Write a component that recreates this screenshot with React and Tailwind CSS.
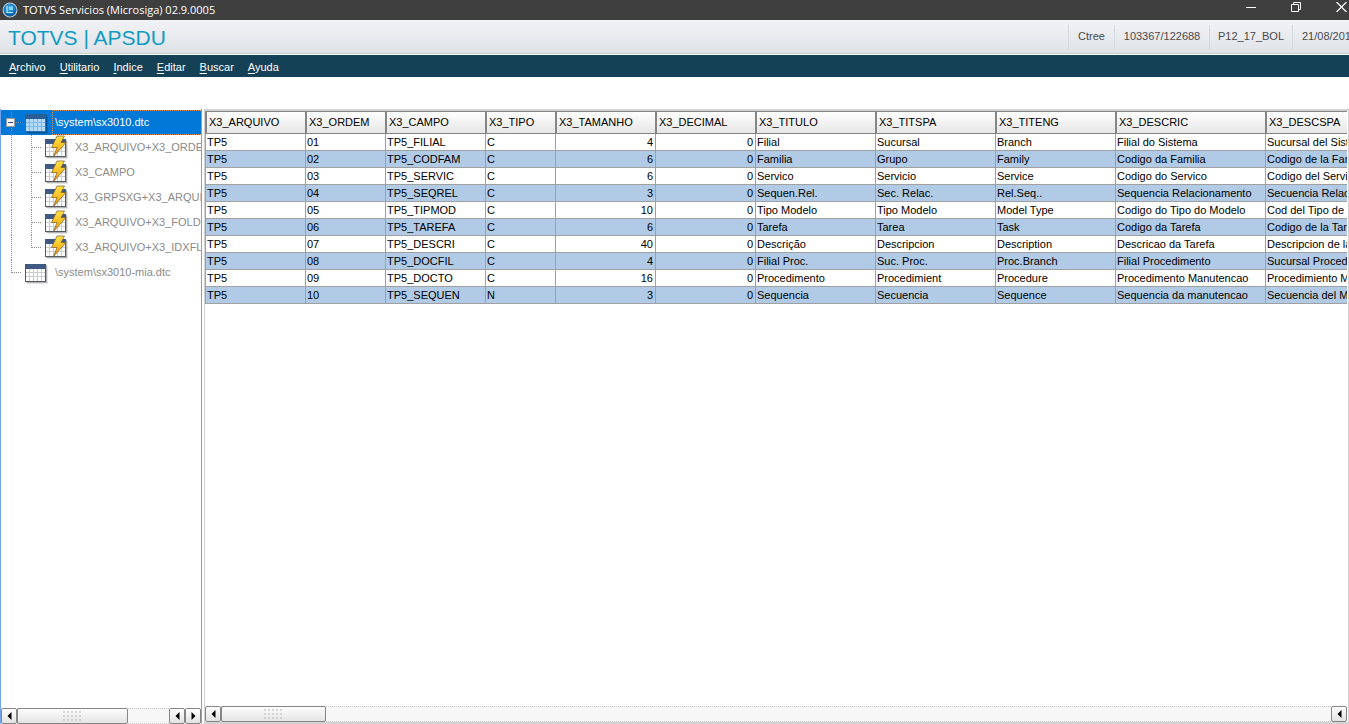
import React, { useState } from 'react';
import clsx from 'clsx';

const menuItems = ['Archivo', 'Utilitario', 'Indice', 'Editar', 'Buscar', 'Ayuda'];

const statusItems = [
  { label: 'Ctree', width: 'w-[46px]' },
  { label: '103367/122688', width: 'w-[95px]' },
  { label: 'P12_17_BOL', width: 'w-[83px]' },
  { label: '21/08/201', width: 'w-[57px]' },
];

const treeItems = [
  { label: '\\system\\sx3010.dtc', level: 0, open: true },
  { label: 'X3_ARQUIVO+X3_ORDEM', level: 1 },
  { label: 'X3_CAMPO', level: 1 },
  { label: 'X3_GRPSXG+X3_ARQUIV', level: 1 },
  { label: 'X3_ARQUIVO+X3_FOLDE', level: 1 },
  { label: 'X3_ARQUIVO+X3_IDXFLD', level: 1, last: true },
  { label: '\\system\\sx3010-mia.dtc', level: 0, last: true },
];

const columns = [
  { name: 'X3_ARQUIVO', width: 'w-[100px]' },
  { name: 'X3_ORDEM', width: 'w-[80px]' },
  { name: 'X3_CAMPO', width: 'w-[100px]' },
  { name: 'X3_TIPO', width: 'w-[70px]' },
  { name: 'X3_TAMANHO', width: 'w-[100px]', numeric: true },
  { name: 'X3_DECIMAL', width: 'w-[100px]', numeric: true },
  { name: 'X3_TITULO', width: 'w-[120px]' },
  { name: 'X3_TITSPA', width: 'w-[120px]' },
  { name: 'X3_TITENG', width: 'w-[120px]' },
  { name: 'X3_DESCRIC', width: 'w-[150px]' },
  { name: 'X3_DESCSPA', width: 'w-[150px]' },
];

const rows = [
  ['TP5', '01', 'TP5_FILIAL', 'C', '4', '0', 'Filial', 'Sucursal', 'Branch', 'Filial do Sistema', 'Sucursal del Sistema'],
  ['TP5', '02', 'TP5_CODFAM', 'C', '6', '0', 'Familia', 'Grupo', 'Family', 'Codigo da Familia', 'Codigo de la Familia'],
  ['TP5', '03', 'TP5_SERVIC', 'C', '6', '0', 'Servico', 'Servicio', 'Service', 'Codigo do Servico', 'Codigo del Servicio'],
  ['TP5', '04', 'TP5_SEQREL', 'C', '3', '0', 'Sequen.Rel.', 'Sec. Relac.', 'Rel.Seq..', 'Sequencia Relacionamento', 'Secuencia Relacion'],
  ['TP5', '05', 'TP5_TIPMOD', 'C', '10', '0', 'Tipo Modelo', 'Tipo Modelo', 'Model Type', 'Codigo do Tipo do Modelo', 'Cod del Tipo de Modelo'],
  ['TP5', '06', 'TP5_TAREFA', 'C', '6', '0', 'Tarefa', 'Tarea', 'Task', 'Codigo da Tarefa', 'Codigo de la Tarea'],
  ['TP5', '07', 'TP5_DESCRI', 'C', '40', '0', 'Descrição', 'Descripcion', 'Description', 'Descricao da Tarefa', 'Descripcion de la Tarea'],
  ['TP5', '08', 'TP5_DOCFIL', 'C', '4', '0', 'Filial Proc.', 'Suc. Proc.', 'Proc.Branch', 'Filial Procedimento', 'Sucursal Procedimiento'],
  ['TP5', '09', 'TP5_DOCTO', 'C', '16', '0', 'Procedimento', 'Procedimient', 'Procedure', 'Procedimento Manutencao', 'Procedimiento Mant.'],
  ['TP5', '10', 'TP5_SEQUEN', 'N', '3', '0', 'Sequencia', 'Secuencia', 'Sequence', 'Sequencia da manutencao', 'Secuencia del Mant.'],
];

const AppLogo = () => (
  <svg width="16" height="16" viewBox="0 0 16 16" aria-hidden="true">
    <defs>
      <radialGradient id="globe" cx="0.45" cy="0.35" r="0.65">
        <stop offset="0" stopColor="#3fb0ea" />
        <stop offset="0.7" stopColor="#1277bd" />
        <stop offset="1" stopColor="#0b4c86" />
      </radialGradient>
    </defs>
    <circle cx="8" cy="8" r="7.5" fill="#b9c8d4" />
    <circle cx="8" cy="8" r="6.4" fill="url(#globe)" />
    <path d="M5 4v6.500h6" fill="none" stroke="#bfe6fb" strokeWidth="1.200" />
    <path d="M7 4.500h4V8H7z" fill="#8fd0f5" />
  </svg>
);

// connector lines drawn to the left of a tree node
const Guide = ({ branch, last, box }) => (
  <svg className="shrink-0" width="20" height="25" viewBox="0 0 20 25" aria-hidden="true">
    <path d={last ? 'M10.500 0V13' : 'M10.500 0V25'} stroke="#8c8c8c" strokeDasharray="1 1" />
    {branch && <path d="M11 12.500H20" stroke="#8c8c8c" strokeDasharray="1 1" />}
    {box && (
      <>
        <rect x="5.500" y="8.500" width="8" height="8" fill="#f4f4f4" stroke="#9a9a9a" />
        <path d="M7 12.500h5" stroke="#3c4f86" />
      </>
    )}
  </svg>
);

const TableIcon = ({ selected, indexed }) => (
  <svg className="ml-1 shrink-0" width="27" height="25" viewBox="0 0 27 25" aria-hidden="true">
    <rect x="2" y="6" width="21" height="18" rx="1" fill="#000" opacity="0.100" />
    <rect x="1" y="5" width="21" height="18" fill="#000" opacity="0.220" />
    <rect x="0.500" y="4.500" width="20" height="17" fill={selected ? '#b4dbf8' : '#fff'} stroke={selected ? '#2f6ea8' : '#555b63'} />
    <rect x="0" y="4" width="21" height="5" fill={selected ? '#2a5f96' : '#3f5a82'} />
    <path
      d="M1 12.500h19M1 16.500h19M4.500 9v12M8.500 9v12M12.500 9v12M16.500 9v12"
      stroke={selected ? '#7db9e6' : '#c9ccd1'}
      fill="none"
    />
    {indexed && (
      <path
        d="M12 1h7.500l-3.500 6.500h5L8.500 21.500l3.500-9H6.500z"
        fill="url(#bolt)"
        stroke="#7d5b18"
        strokeWidth="0.700"
      />
    )}
    <defs>
      <linearGradient id="bolt" x1="0" y1="0" x2="0" y2="1">
        <stop offset="0" stopColor="#ffe14f" />
        <stop offset="0.500" stopColor="#fcc021" />
        <stop offset="1" stopColor="#e08a0c" />
      </linearGradient>
    </defs>
  </svg>
);

const ScrollButton = ({ direction }) => (
  <button
    type="button"
    aria-label={direction === 'left' ? 'Scroll left' : 'Scroll right'}
    className="flex h-4 w-4 shrink-0 items-center justify-center rounded-xs border border-[#858585] bg-gradient-to-b from-white to-[#e2e2e2]"
  >
    <svg width="5" height="8" viewBox="0 0 5 8" aria-hidden="true">
      <path d={direction === 'left' ? 'M4.500 0v8L0.500 4z' : 'M0.500 0v8L4.500 4z'} fill="#000" />
    </svg>
  </button>
);

const ScrollTrack = ({ thumb }) => (
  <div className="h-4 flex-1 border-y border-dotted border-[#c4c4c4] bg-[#f7f7f7]">
    <div
      className={clsx(
        '-my-px flex h-4 items-center justify-center rounded-xs border border-[#858585] bg-gradient-to-b from-[#fdfdfd] to-[#e4e4e4]',
        thumb
      )}
    >
      <svg width="19" height="10" viewBox="0 0 19 10" aria-hidden="true">
        <path d="M0 1h19M0 5h19M0 9h19" stroke="#b5b5b5" strokeWidth="1" strokeDasharray="2 2" />
      </svg>
    </div>
  </div>
);

const TitleBar = () => (
  <div className="flex h-5 items-center bg-[#3f3f3f] pl-[2px] text-white">
    <AppLogo />
    <span className="ml-[5px] flex-1 font-['Open_Sans',sans-serif] text-[11px] leading-4">TOTVS Servicios (Microsiga) 02.9.0005</span>
    <button type="button" aria-label="Minimize" className="flex h-5 w-[45px] items-start justify-center pt-[2px]">
      <svg width="10" height="10" viewBox="0 0 10 10"><path d="M0 5.500h10" stroke="#fff" /></svg>
    </button>
    <button type="button" aria-label="Restore" className="flex h-5 w-[45px] items-start justify-center pt-[2px]">
      <svg width="10" height="10" viewBox="0 0 10 10" fill="none" stroke="#fff">
        <path d="M0.500 2.500h7v7h-7zM2.500 2.500v-2h7v7h-2" />
      </svg>
    </button>
    <button type="button" aria-label="Close" className="flex h-5 w-[31px] items-start justify-end pt-[2px] pr-[2px]">
      <svg width="11" height="10" viewBox="0 0 11 10"><path d="M0.500 0l10 10M10.500 0l-10 10" stroke="#fff" strokeWidth="1.200" /></svg>
    </button>
  </div>
);

const Header = () => (
  <header className="border-b border-white">
    <div className="flex h-[34px] items-center justify-between border-b border-[#c3d0cd] bg-gradient-to-b from-[#f1f2f6] to-[#dfe3e8] pl-2">
      <h1 className="pt-[2px] text-[21px] leading-6 text-[#119bc4]">TOTVS | APSDU</h1>
      <div className="flex">
        {statusItems.map((item) => (
          <span
            key={item.label}
            className={clsx(
              'flex h-6 items-center justify-center overflow-hidden border-l border-[#d3d8d8] whitespace-nowrap text-[#4a4a4a] last:justify-start last:pl-[9px]',
              item.width
            )}
          >
            {item.label}
          </span>
        ))}
      </div>
    </div>
  </header>
);

const MenuBar = () => (
  <nav className="flex h-[22px] items-center gap-[14px] bg-[#154156] pt-[2px] pl-[9px] text-white">
    {menuItems.map((item) => (
      <button key={item} type="button" className="leading-4">
        <span className="underline underline-offset-2">{item[0]}</span>
        {item.slice(1)}
      </button>
    ))}
  </nav>
);

const FileTree = () => {
  const [selected, setSelected] = useState(0);

  return (
    <aside className="flex w-[202px] shrink-0 flex-col border-x border-[#76a3ee] pt-px">
      <ul className="flex-1 overflow-hidden">
        {treeItems.map((item, i) => {
          const isSelected = i === selected;
          return (
            <li key={item.label}>
              <button
                type="button"
                onClick={() => setSelected(i)}
                className={clsx(
                  'flex h-[25px] w-full items-center text-left',
                  isSelected ? 'bg-[#0078d7] text-white' : 'text-[#8a8a8a]'
                )}
              >
                {item.level === 1 && <Guide />}
                <Guide branch last={item.last} box={item.open} />
                <TableIcon selected={isSelected} indexed={item.level === 1} />
                <span
                  className={clsx(
                    'flex h-[25px] min-w-0 flex-1 items-center overflow-hidden border-y border-l border-dotted pl-[2px] whitespace-nowrap',
                    isSelected ? 'border-[#e09050]' : 'border-transparent'
                  )}
                >
                  {item.label}
                </span>
              </button>
            </li>
          );
        })}
      </ul>
      <div className="flex">
        <ScrollButton direction="left" />
        <ScrollTrack thumb="w-[111px]" />
        <ScrollButton direction="left" />
        <ScrollButton direction="right" />
      </div>
    </aside>
  );
};

const DataGrid = () => (
  <main className="ml-[2px] flex min-w-0 flex-1 flex-col border-t-2 border-r border-b-2 border-l border-[#d2d2d2] pr-px">
    <div className="min-h-0 flex-1 overflow-hidden">
      <table className="w-max table-fixed border-separate border-spacing-0">
        <thead>
          <tr>
            {columns.map((col) => (
              <th
                key={col.name}
                scope="col"
                className={clsx(
                  'h-[23px] border-t border-b border-l-2 border-[#858585] bg-gradient-to-b from-white to-[#e6e6e6] p-0 pl-[2px] text-left font-normal',
                  col.width
                )}
              >
                {col.name}
              </th>
            ))}
          </tr>
        </thead>
        <tbody>
          {rows.map((row) => (
            <tr key={row[1]} className="even:bg-[#b1cae6]">
              {row.map((value, i) => (
                <td
                  key={columns[i].name}
                  className={clsx(
                    'h-[17px] max-w-0 overflow-hidden border-b border-l border-[#a0a0a0] p-0 leading-4 whitespace-nowrap',
                    columns[i].numeric ? 'pr-[2px] text-right' : 'pl-px'
                  )}
                >
                  {value}
                </td>
              ))}
            </tr>
          ))}
        </tbody>
      </table>
    </div>
    <div className="flex">
      <ScrollButton direction="left" />
      <ScrollTrack thumb="w-[105px]" />
      <ScrollButton direction="left" />
    </div>
  </main>
);

export default function App() {
  return (
    <div className="flex h-screen flex-col overflow-hidden bg-white font-['Liberation_Sans',Arial,sans-serif] text-[11px] text-black">
      <TitleBar />
      <Header />
      <MenuBar />
      <div className="flex min-h-0 flex-1 pt-8">
        <FileTree />
        <DataGrid />
      </div>
    </div>
  );
}
